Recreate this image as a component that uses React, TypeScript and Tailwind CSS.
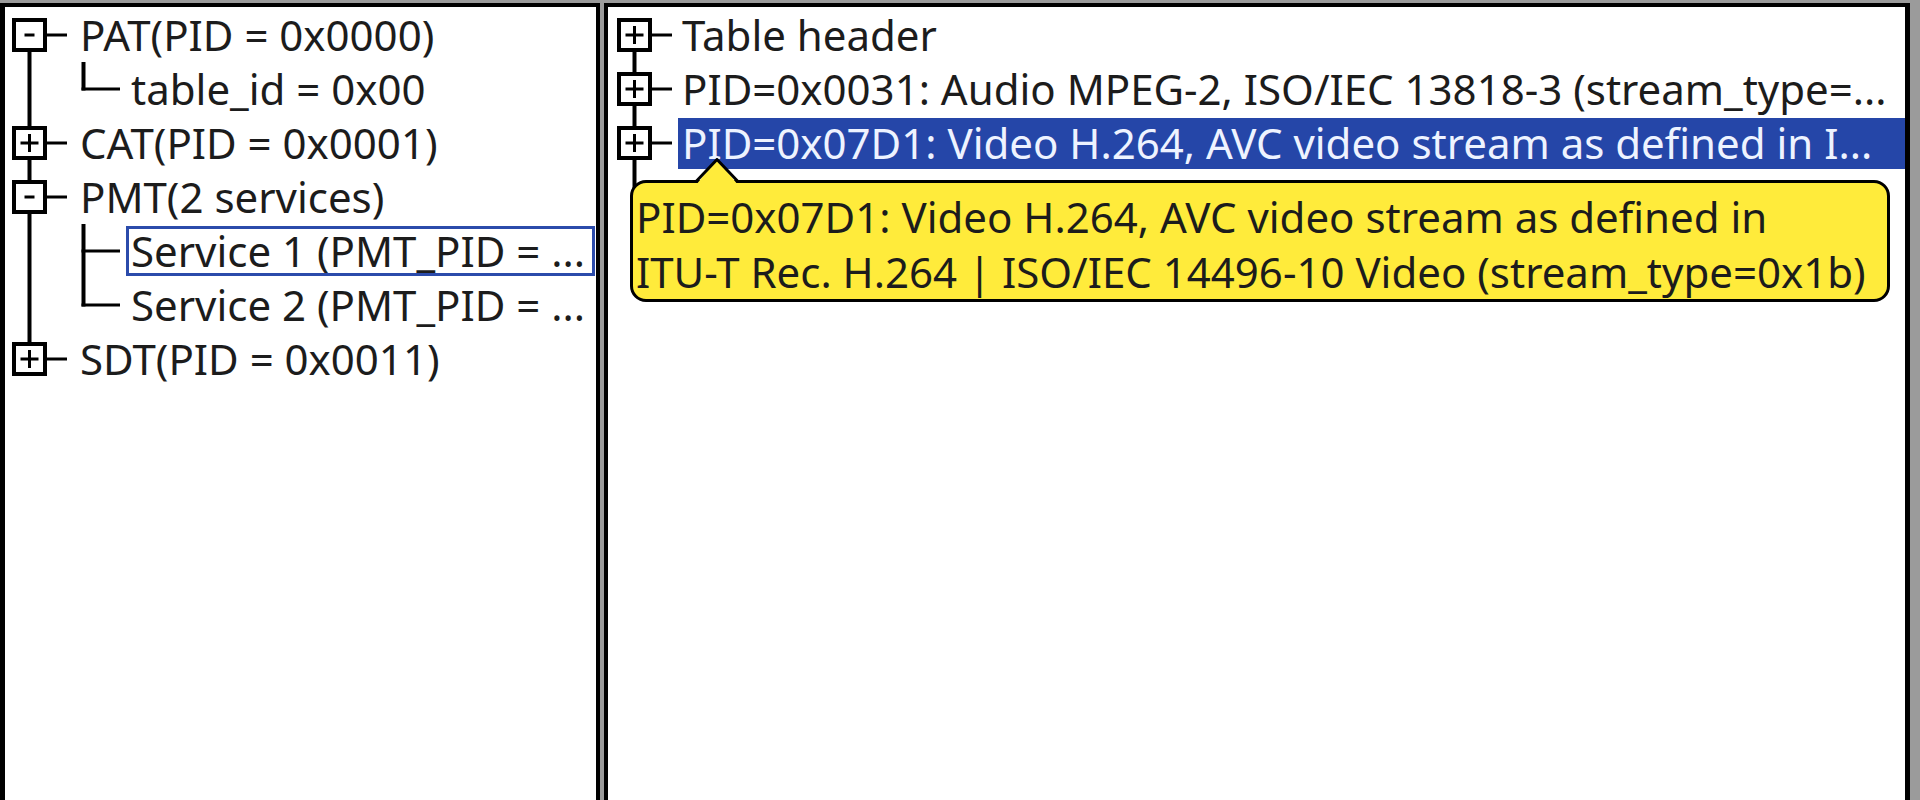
import React from "react";

type Kind = "minus" | "plus";

// Gutter for a top-level node: expander box + vertical trunk + connector
const NodeGutter = ({
  kind,
  above,
  below,
  x0,
  width,
  extend = 0,
}: {
  kind: Kind;
  above: boolean;
  below: boolean;
  x0: number;
  width: number;
  extend?: number;
}) => {
  const cx = x0 + 17.5;
  return (
    <svg width={width} height={54} className="shrink-0 overflow-visible">
      {above && <line x1={cx} y1={0} x2={cx} y2={10} stroke="#000" strokeWidth={4} />}
      {below && <line x1={cx} y1={44} x2={cx} y2={54 + extend} stroke="#000" strokeWidth={4} />}
      <rect x={x0 + 2} y={12} width={31} height={30} fill="#fff" stroke="#000" strokeWidth={4} />
      <line x1={x0 + 35} y1={27} x2={x0 + 55} y2={27} stroke="#000" strokeWidth={3} />
      {kind === "minus" ? (
        <line x1={cx - 5} y1={27} x2={cx + 5} y2={27} stroke="#000" strokeWidth={3} />
      ) : (
        <>
          <line x1={cx - 9} y1={27} x2={cx + 9} y2={27} stroke="#000" strokeWidth={3} />
          <line x1={cx} y1={18} x2={cx} y2={36} stroke="#000" strokeWidth={3} />
        </>
      )}
    </svg>
  );
};

// Gutter for a child leaf: trunk passes through, plus ├ or └ branch
const LeafGutter = ({ last }: { last: boolean }) => (
  <svg width={121} height={54} className="shrink-0">
    <line x1={24.5} y1={0} x2={24.5} y2={54} stroke="#000" strokeWidth={4} />
    <line x1={78.5} y1={0} x2={78.5} y2={last ? 28.5 : 54} stroke="#000" strokeWidth={4} />
    <line x1={76.5} y1={27} x2={115} y2={27} stroke="#000" strokeWidth={3} />
  </svg>
);

const text = "text-[42px] leading-[54px] text-[#1c1c1c] whitespace-nowrap";

const LeftTree = () => (
  <div className="pt-[1px]">
    <div className="flex h-[54px] items-center">
      <NodeGutter kind="minus" above={false} below x0={7} width={75} />
      <span className={text}>PAT(PID = 0x0000)</span>
    </div>
    <div className="flex h-[54px] items-center">
      <LeafGutter last />
      <span className={`${text} border-[3px] border-transparent pl-[2px]`}>table_id = 0x00</span>
    </div>
    <div className="flex h-[54px] items-center">
      <NodeGutter kind="plus" above below x0={7} width={75} />
      <span className={text}>CAT(PID = 0x0001)</span>
    </div>
    <div className="flex h-[54px] items-center">
      <NodeGutter kind="minus" above below x0={7} width={75} />
      <span className={text}>PMT(2 services)</span>
    </div>
    <div className="flex h-[54px] items-center">
      <LeafGutter last={false} />
      <span className="flex h-[50px] flex-1 items-center overflow-hidden border-[3px] border-[#2b4bab] pl-[2px] mr-[1px]">
        <span className={text}>Service 1 (PMT_PID = ...</span>
      </span>
    </div>
    <div className="flex h-[54px] items-center">
      <LeafGutter last />
      <span className={`${text} border-[3px] border-transparent pl-[2px]`}>Service 2 (PMT_PID = ...</span>
    </div>
    <div className="flex h-[54px] items-center">
      <NodeGutter kind="plus" above below={false} x0={7} width={75} />
      <span className={text}>SDT(PID = 0x0011)</span>
    </div>
  </div>
);

const RightTree = () => (
  <div className="pt-[1px]">
    <div className="flex h-[54px] items-center">
      <NodeGutter kind="plus" above={false} below x0={9} width={70} />
      <span className={`${text} pl-[4px]`}>Table header</span>
    </div>
    <div className="flex h-[54px] items-center">
      <NodeGutter kind="plus" above below x0={9} width={70} />
      <span className={`${text} pl-[4px]`}>
        PID=0x0031: Audio MPEG-2, ISO/IEC 13818-3 (stream_type=...
      </span>
    </div>
    <div className="flex h-[54px] items-center">
      <NodeGutter kind="plus" above below x0={9} width={70} extend={20} />
      <span className="flex h-[51px] flex-1 items-center overflow-hidden bg-[#2546a8] pl-[4px]">
        <span className="text-[42px] leading-[54px] text-[#eef3ff] whitespace-nowrap">
          PID=0x07D1: Video H.264, AVC video stream as defined in I...
        </span>
      </span>
    </div>
  </div>
);

const Tooltip = () => (
  <>
    <div className="absolute left-[22px] top-[173px] w-[1260px] rounded-[16px] border-[3px] border-black bg-[#ffeb3b] pl-[3px] pt-[6px] text-[42px] leading-[55px] text-[#1c1c1c] whitespace-nowrap">
      PID=0x07D1: Video H.264, AVC video stream as defined in
      <br />
      ITU-T Rec. H.264 | ISO/IEC 14496-10 Video (stream_type=0x1b)
    </div>
    <svg width={44} height={27} className="absolute left-[87px] top-[151px]">
      <polygon points="1,27 22,1 43,27" fill="#ffeb3b" />
      <polyline points="1,23.5 22,1.5 43,23.5" fill="none" stroke="#000" strokeWidth={3} strokeLinejoin="round" />
    </svg>
  </>
);

export default function App() {
  return (
    <div className="flex h-[800px] w-[1920px] gap-[4px] overflow-hidden bg-[#9b9b9b] pt-[3px] pr-[10px] font-['Noto_Sans',sans-serif]">
      <div className="w-[600px] shrink-0 border-l-[5px] border-r-[4px] border-t-[4px] border-black bg-white">
        <LeftTree />
      </div>
      <div className="relative flex-1 border-l-[4px] border-r-[5px] border-t-[4px] border-black bg-white">
        <RightTree />
        <Tooltip />
      </div>
    </div>
  );
}
